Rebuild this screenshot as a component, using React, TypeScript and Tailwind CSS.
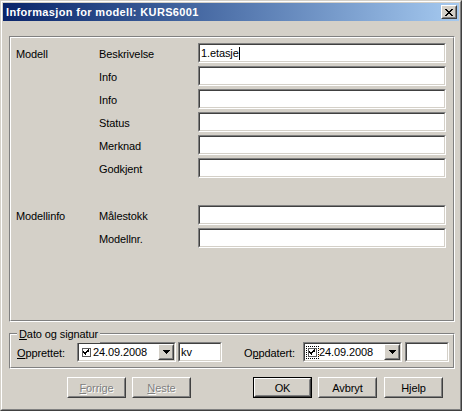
import React from "react";

// Win2000-style "Informasjon for modell" dialog

const sunkenOuter = "border border-t-[#808080] border-l-[#808080] border-b-white border-r-white";
const sunkenInner = "border border-t-[#404040] border-l-[#404040] border-b-[#d4d0c8] border-r-[#d4d0c8]";
const raisedOuter = "border border-t-white border-l-white border-b-[#404040] border-r-[#404040]";
const raisedInner = "border border-t-[#d4d0c8] border-l-[#d4d0c8] border-b-[#808080] border-r-[#808080]";
const etchedOuter = "border border-t-[#808080] border-l-[#808080] border-b-white border-r-white";
const etchedInner = "border border-t-white border-l-white border-b-[#808080] border-r-[#808080]";

interface Row {
  group?: string;
  label: string;
  value?: string;
}

const topRows: Row[] = [
  { group: "Modell", label: "Beskrivelse", value: "1.etasje" },
  { label: "Info" },
  { label: "Info" },
  { label: "Status" },
  { label: "Merknad" },
  { label: "Godkjent" },
];

const bottomRows: Row[] = [
  { group: "Modellinfo", label: "Målestokk" },
  { label: "Modellnr." },
];

function TextBox({
  value,
  cursor = false,
  className = "",
}: {
  value?: string;
  cursor?: boolean;
  className?: string;
}) {
  return (
    <div className={`${sunkenOuter} h-[20px] ${className}`}>
      <div className={`${sunkenInner} h-full bg-white flex items-center pl-[1px]`}>
        {value && <span className="pt-[1px]">{value}</span>}
        {cursor && <span className="w-px h-[13px] bg-black" />}
      </div>
    </div>
  );
}

function FieldRow({ group, label, value }: Row) {
  return (
    <div className="flex items-center h-[20px]">
      <span className="w-[83px] pt-[3px]">{group}</span>
      <span className="w-[99px] pt-[3px]">{label}</span>
      <TextBox value={value} cursor={!!value} className="w-[248px]" />
    </div>
  );
}

function DatePicker({ focused = false }: { focused?: boolean }) {
  return (
    <div className={`${sunkenOuter} w-[99px] h-[20px]`}>
      <div className={`${sunkenInner} h-full bg-white flex items-center`}>
        <span
          className={`ml-[3px] flex items-center justify-center w-[9px] h-[9px] border border-[#5a5a5a] ${
            focused ? "outline-1 outline-dotted outline-offset-1 outline-black" : ""
          }`}
        >
          <svg width="7" height="7" viewBox="0 0 7 7" shapeRendering="crispEdges">
            <path d="M0 2h1v3H0zM1 3h1v3H1zM2 4h1v3H2zM3 3h1v3H3zM4 2h1v3H4zM5 1h1v3H5zM6 0h1v3H6z" fill="#000" transform="scale(0.86)" />
          </svg>
        </span>
        <span className="ml-[2px] pt-[1px]">24.09.2008</span>
        <span className={`${raisedOuter} ml-auto w-[16px] h-full`}>
          <span className={`${raisedInner} h-full bg-[#d4d0c8] flex items-center justify-center`}>
            <svg width="7" height="4" viewBox="0 0 7 4" shapeRendering="crispEdges">
              <path d="M0 0h7v1H0zM1 1h5v1H1zM2 2h3v1H2zM3 3h1v1H3z" fill="#000" />
            </svg>
          </span>
        </span>
      </div>
    </div>
  );
}

function Button({
  children,
  disabled = false,
  isDefault = false,
  className = "",
}: {
  children: React.ReactNode;
  disabled?: boolean;
  isDefault?: boolean;
  className?: string;
}) {
  return (
    <div className={`w-[59px] h-[21px] ${isDefault ? "border border-black" : ""} ${className}`}>
      <div className={`${raisedOuter} h-full`}>
        <div
          className={`${raisedInner} h-full flex items-center justify-center pt-[1px] ${
            disabled ? "text-[#808080] [text-shadow:1px_1px_0_#fff]" : ""
          }`}
        >
          {children}
        </div>
      </div>
    </div>
  );
}

export default function App() {
  return (
    <div className="w-[462px] h-[411px] bg-[#d4d0c8] text-black text-[11px] tracking-[-0.1px] font-['Liberation_Sans',Arial,sans-serif] border border-t-[#d4d0c8] border-l-[#d4d0c8] border-b-[#404040] border-r-[#404040]">
      <div className="h-full border border-t-white border-l-white border-b-[#808080] border-r-[#808080] p-px flex flex-col">
        {/* title bar */}
        <div className="h-[18px] flex items-center justify-between px-[2px] bg-linear-to-r from-[#0a246a] to-[#a6caf0]">
          <span className="text-white font-bold tracking-[0.35px] pl-[1px]">Informasjon for modell: KURS6001</span>
          <div className={`${raisedOuter} w-[16px] h-[14px]`}>
            <div className={`${raisedInner} h-full bg-[#d4d0c8] flex items-center justify-center`}>
              <svg width="8" height="7" viewBox="0 0 8 7" shapeRendering="crispEdges">
                <path
                  d="M0 0h2v1H0zM6 0h2v1H6zM1 1h2v1H1zM5 1h2v1H5zM2 2h4v1H2zM3 3h2v1H3zM2 4h4v1H2zM1 5h2v1H1zM5 5h2v1H5zM0 6h2v1H0zM6 6h2v1H6z"
                  fill="#000"
                />
              </svg>
            </div>
          </div>
        </div>

        {/* main panel */}
        <div className={`${etchedOuter} ml-[6px] mr-[4px] mt-[15px] h-[286px]`}>
          <div className={`${etchedInner} h-full pt-[5px] pl-[5px] flex flex-col gap-[3px]`}>
            {topRows.map((r, i) => (
              <FieldRow key={i} {...r} />
            ))}
            <div className="h-[21px]" />
            {bottomRows.map((r, i) => (
              <FieldRow key={i} {...r} />
            ))}
          </div>
        </div>

        {/* Dato og signatur */}
        <div className={`${etchedOuter} relative ml-[6px] mr-[4px] mt-[11px] h-[36px]`}>
          <span className="absolute left-[7px] top-[-8px] px-[2px] bg-[#d4d0c8]">
            <span className="underline">D</span>ato og signatur
          </span>
          <div className={`${etchedInner} h-full flex items-center pt-[2px] pl-[6px]`}>
            <span className="w-[60px] pt-[2px]">
              <span className="underline">O</span>pprettet:
            </span>
            <DatePicker />
            <TextBox value="kv" className="w-[44px] ml-[2px]" />
            <span className="ml-[22px] w-[59px] pt-[2px]">
              O<span className="underline">p</span>pdatert:
            </span>
            <DatePicker focused />
            <TextBox className="w-[44px] ml-[3px]" />
          </div>
        </div>

        {/* buttons */}
        <div className="flex mt-[8px] pl-[64px] h-[21px]">
          <Button disabled>
            <span className="underline">F</span>orrige
          </Button>
          <Button disabled className="ml-[6px]">
            <span className="underline">N</span>este
          </Button>
          <Button isDefault className="ml-[62px]">
            OK
          </Button>
          <Button className="ml-[6px]">Avbryt</Button>
          <Button className="ml-[7px]">Hjelp</Button>
        </div>
      </div>
    </div>
  );
}
